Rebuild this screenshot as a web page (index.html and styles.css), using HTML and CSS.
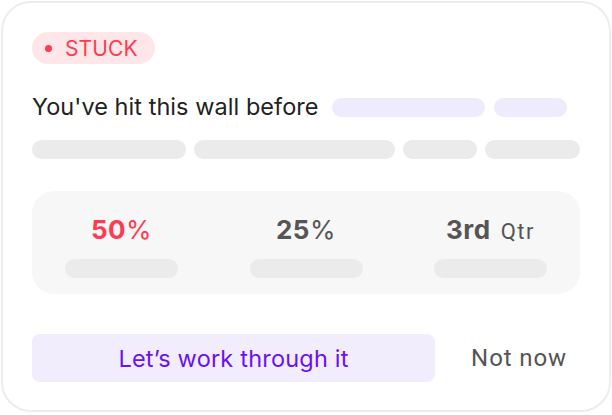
FILE: index.html
```html
<!DOCTYPE html>
<html lang="en">
<head>
<meta charset="utf-8">
<title>Stuck card</title>
<link rel="stylesheet" href="styles.css">
</head>
<body>
<div class="card">
  <div class="badge"><span class="dot"></span><span class="badge-text">STUCK</span></div>
  <div class="title-row">
    <h1 class="title">You've hit this wall before</h1>
    <span class="pill pill-purple w153"></span>
    <span class="pill pill-purple w73"></span>
  </div>
  <div class="pill-row">
    <span class="pill pill-gray w154"></span>
    <span class="pill pill-gray w201"></span>
    <span class="pill pill-gray w74"></span>
    <span class="pill pill-gray w95"></span>
  </div>
  <div class="stats">
    <div class="stat">
      <div class="stat-value red"><b>50</b><span class="unit">%</span></div>
      <span class="pill pill-gray full"></span>
    </div>
    <div class="stat">
      <div class="stat-value"><b>25</b><span class="unit">%</span></div>
      <span class="pill pill-gray full"></span>
    </div>
    <div class="stat">
      <div class="stat-value"><b>3rd</b><span class="unit qtr">Qtr</span></div>
      <span class="pill pill-gray full"></span>
    </div>
  </div>
  <div class="actions">
    <button class="btn-primary">Let’s work through it</button>
    <button class="btn-secondary">Not now</button>
  </div>
</div>
</body>
</html>
```
FILE: styles.css
```css
* { box-sizing: border-box; }
html, body { margin: 0; padding: 0; background: #ffffff; }
body { font-family: Inter, "Noto Sans", sans-serif; }

.card {
  margin: 1px;
  width: 610px;
  height: 411px;
  border: 2px solid #ececec;
  border-radius: 30px;
  padding: 29px 29px 0 29px;
  background: #fff;
}

.badge {
  display: inline-flex;
  align-items: center;
  height: 32px;
  padding: 0 17px 0 13px;
  border-radius: 16px;
  background: #ffe6e8;
  color: #ff3b50;
}
.dot {
  width: 7px; height: 7px;
  border-radius: 50%;
  background: #ff3b50;
  margin-right: 13px;
}
.badge-text { font-size: 21px; font-weight: 400; letter-spacing: 0.1px; line-height: 1; }

.title-row {
  display: flex;
  align-items: center;
  height: 28px;
  margin-top: 29px;
  gap: 9px;
}
.title {
  margin: 0 4px 0 0;
  font-size: 23.5px;
  font-weight: 400;
  letter-spacing: 0.05px;
  color: #222;
  line-height: 28px;
  white-space: nowrap;
}

.pill { display: block; height: 19px; border-radius: 10px; flex: none; }
.pill-purple { background: #eeebfd; }
.pill-gray { background: #ebebeb; }
.w153 { width: 153px; }
.w73 { width: 73px; }
.w154 { width: 154px; }
.w201 { width: 201px; }
.w74 { width: 74px; }
.w95 { width: 95px; }
.full { width: 100%; }

.pill-row {
  display: flex;
  gap: 8px;
  margin-top: 19px;
}

.stats {
  margin-top: 32px;
  height: 103px;
  background: #f7f7f7;
  border-radius: 22px;
  display: grid;
  grid-template-columns: 113px 113px 113px;
  justify-content: space-between;
  padding: 24px 33px 16px 33px;
}
.stat { display: flex; flex-direction: column; align-items: center; gap: 14px; }
.stat-value {
  height: 30px;
  line-height: 30px;
  font-size: 26px;
  color: #555;
  white-space: nowrap;
  letter-spacing: 0.5px;
}
.stat-value b { font-weight: 700; }
.stat-value .unit { font-weight: 400; }
.stat-value .qtr { font-size: 22px; margin-left: 10px; letter-spacing: 1.5px; font-family: Roboto, sans-serif; }
.red { color: #ff3b50; }

.actions {
  display: flex;
  margin-top: 40px;
  height: 48px;
}
.btn-primary {
  flex: 0 0 403px;
  border: none;
  border-radius: 8px;
  background: #f1edfc;
  color: #6a10f5;
  font-family: inherit;
  font-size: 23.5px;
  font-weight: 400;
  letter-spacing: 0.2px;
  cursor: pointer;
}
.btn-secondary {
  margin-left: auto;
  border: none;
  background: transparent;
  padding: 0 13px 0 14px;
  color: #555;
  font-family: Roboto, sans-serif;
  font-size: 24px;
  letter-spacing: 0.9px;
  cursor: pointer;
}
```
